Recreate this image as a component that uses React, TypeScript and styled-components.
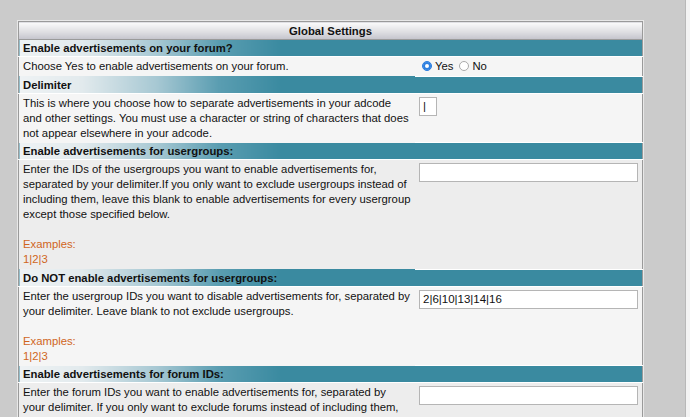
import React from "react";
import styled, { createGlobalStyle } from "styled-components";

const Global = createGlobalStyle`
  html, body { margin: 0; height: 100%; overflow: hidden; }
  body { background: #cbcbcb; font-family: "Liberation Sans", Arial, sans-serif; }
`;

const Page = styled.div`
  display: flex;
  height: 417px;
`;

const Main = styled.div`
  flex: 1;
  padding: 21px 0 0 18px;
`;

const ScrollEdge = styled.div`
  width: 4px;
  background: #f4f4f4;
  border-left: 1px solid #b8b8b8;
`;

const Table = styled.table`
  width: 625px;
  border-collapse: collapse;
  border: 1px solid #9a9a9a;
  outline: 1px solid #e8e8e8;
  font-size: 11.3px;
  color: #111;
`;

const Title = styled.th`
  height: 17px;
  padding: 0;
  font-size: 11.3px;
  font-weight: bold;
  background: linear-gradient(#fbfbfb, #dcdce0 60%, #c4c4cc);
  border-bottom: 1px solid #9a9a9a;
`;

const Section = styled.td`
  height: 16px;
  padding: 0 4px;
  font-weight: bold;
  font-size: 11.3px;
  background: linear-gradient(90deg, #eef2f4 0%, #e2eaed 10%, #a7c8d3 22%, #5a9db1 32%, #3a8aa0 42%, #3a8aa0 100%);
  border-bottom: 1px solid #fff;
`;

const Desc = styled.td<{ $alt?: boolean }>`
  width: 392px;
  padding: 2px 4px 2px;
  vertical-align: top;
  line-height: 15px;
  background: ${(p) => (p.$alt ? "#ededed" : "#f5f5f5")};
`;

const Value = styled.td<{ $alt?: boolean }>`
  padding: 3px 4px;
  vertical-align: top;
  background: ${(p) => (p.$alt ? "#ededed" : "#f5f5f5")};
  border-bottom: 1px solid #fff;
`;

const Examples = styled.div`
  margin-top: 15px;
  color: #d0651c;
`;

const TextInput = styled.div<{ $small?: boolean }>`
  box-sizing: border-box;
  width: ${(p) => (p.$small ? "18px" : "219px")};
  height: 19px;
  background: #fff;
  border: 1px solid #b5b5b5;
  padding: 1px 3px;
  line-height: 15px;
  font-size: 11.5px;
`;

const Radios = styled.div`
  display: flex;
  align-items: center;
  gap: 3px;
`;

const Radio = styled.span<{ $on?: boolean }>`
  box-sizing: border-box;
  width: 10px;
  height: 10px;
  border-radius: 50%;
  background: ${(p) => (p.$on ? "#2d7fe0" : "#fff")};
  border: 1px solid ${(p) => (p.$on ? "#2d7fe0" : "#aaa")};
  box-shadow: ${(p) => (p.$on ? "inset 0 0 0 2px #2d7fe0, inset 0 0 0 4px #fff" : "none")};
  margin-left: 3px;
`;

type RowProps = { title: string; alt?: boolean; children: React.ReactNode; value: React.ReactNode; examples?: boolean };

const SettingRow = ({ title, alt, children, value, examples }: RowProps) => (
  <>
    <tr>
      <Section colSpan={2}>{title}</Section>
    </tr>
    <tr>
      <Desc $alt={alt}>
        {children}
        {examples && (
          <Examples>
            Examples:
            <br />
            1|2|3
          </Examples>
        )}
      </Desc>
      <Value $alt={alt}>{value}</Value>
    </tr>
  </>
);

export default function App() {
  return (
    <Page>
      <Global />
      <Main>
        <Table>
          <tbody>
            <tr>
              <Title colSpan={2}>Global Settings</Title>
            </tr>
            <SettingRow
              title="Enable advertisements on your forum?"
              value={
                <Radios>
                  <Radio $on />Yes<Radio />No
                </Radios>
              }
            >
              Choose Yes to enable advertisements on your forum.
            </SettingRow>
            <SettingRow title="Delimiter" value={<TextInput $small>|</TextInput>}>
              This is where you choose how to separate advertisements in your adcode and other settings. You must use a
              character or string of characters that does not appear elsewhere in your adcode.
            </SettingRow>
            <SettingRow title="Enable advertisements for usergroups:" alt examples value={<TextInput />}>
              Enter the IDs of the usergroups you want to enable advertisements for, separated by your delimiter.If you
              only want to exclude usergroups instead of including them, leave this blank to enable advertisements for
              every usergroup except those specified below.
            </SettingRow>
            <SettingRow
              title="Do NOT enable advertisements for usergroups:"
              examples
              value={<TextInput>2|6|10|13|14|16</TextInput>}
            >
              Enter the usergroup IDs you want to disable advertisements for, separated by your delimiter. Leave blank to
              not exclude usergroups.
            </SettingRow>
            <SettingRow title="Enable advertisements for forum IDs:" alt examples value={<TextInput />}>
              Enter the forum IDs you want to enable advertisements for, separated by your delimiter. If you only want to
              exclude forums instead of including them, leave this blank to allow advertisements in every forum except
              those specified below.
            </SettingRow>
          </tbody>
        </Table>
      </Main>
      <ScrollEdge />
    </Page>
  );
}
